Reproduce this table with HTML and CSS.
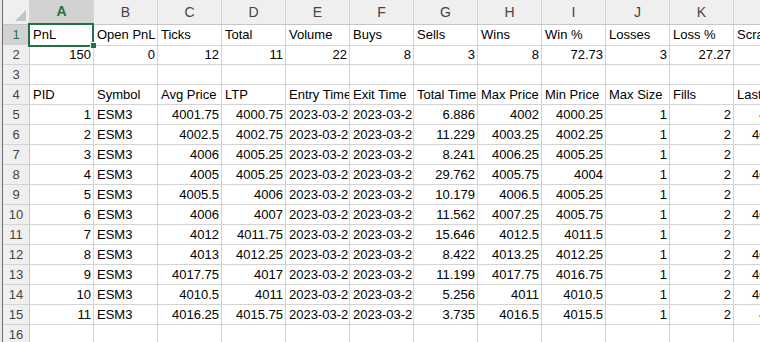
FILE: index.html
```html
<!DOCTYPE html>
<html>
<head>
<meta charset="utf-8">
<link rel="stylesheet" href="styles.css">
</head>
<body>
<div class="sheet">
  <div class="grid">
    <div class="row hdr">
      <div class="c corner"><span class="tri"></span></div>
      <div class="c ch on">A</div><div class="c ch">B</div><div class="c ch">C</div><div class="c ch">D</div><div class="c ch">E</div><div class="c ch">F</div><div class="c ch">G</div><div class="c ch">H</div><div class="c ch">I</div><div class="c ch">J</div><div class="c ch">K</div><div class="c ch">L</div>
    </div>
    <div class="row">
      <div class="c rh on">1</div>
      <div class="c sel">PnL</div><div class="c">Open PnL</div><div class="c">Ticks</div><div class="c">Total</div><div class="c">Volume</div><div class="c">Buys</div><div class="c">Sells</div><div class="c">Wins</div><div class="c">Win %</div><div class="c">Losses</div><div class="c">Loss %</div><div class="c">Scratch</div>
    </div>
    <div class="row">
      <div class="c rh">2</div>
      <div class="c n">150</div><div class="c n">0</div><div class="c n">12</div><div class="c n">11</div><div class="c n">22</div><div class="c n">8</div><div class="c n">3</div><div class="c n">8</div><div class="c n">72.73</div><div class="c n">3</div><div class="c n">27.27</div><div class="c"></div>
    </div>
    <div class="row">
      <div class="c rh">3</div>
      <div class="c"></div><div class="c"></div><div class="c"></div><div class="c"></div><div class="c"></div><div class="c"></div><div class="c"></div><div class="c"></div><div class="c"></div><div class="c"></div><div class="c"></div><div class="c"></div>
    </div>
    <div class="row">
      <div class="c rh">4</div>
      <div class="c">PID</div><div class="c">Symbol</div><div class="c">Avg Price</div><div class="c">LTP</div><div class="c">Entry Time</div><div class="c">Exit Time</div><div class="c">Total Time</div><div class="c">Max Price</div><div class="c">Min Price</div><div class="c">Max Size</div><div class="c">Fills</div><div class="c">Last Price</div>
    </div>
    <div class="row">
      <div class="c rh">5</div>
      <div class="c n">1</div><div class="c">ESM3</div><div class="c n">4001.75</div><div class="c n">4000.75</div><div class="c">2023-03-23 09:31:02</div><div class="c">2023-03-23 09:31:09</div><div class="c n">6.886</div><div class="c n">4002</div><div class="c n">4000.25</div><div class="c n">1</div><div class="c n">2</div><div class="c n">4001.5</div>
    </div>
    <div class="row">
      <div class="c rh">6</div>
      <div class="c n">2</div><div class="c">ESM3</div><div class="c n">4002.5</div><div class="c n">4002.75</div><div class="c">2023-03-23 09:32:14</div><div class="c">2023-03-23 09:32:25</div><div class="c n">11.229</div><div class="c n">4003.25</div><div class="c n">4002.25</div><div class="c n">1</div><div class="c n">2</div><div class="c n">4002.75</div>
    </div>
    <div class="row">
      <div class="c rh">7</div>
      <div class="c n">3</div><div class="c">ESM3</div><div class="c n">4006</div><div class="c n">4005.25</div><div class="c">2023-03-23 09:33:40</div><div class="c">2023-03-23 09:33:48</div><div class="c n">8.241</div><div class="c n">4006.25</div><div class="c n">4005.25</div><div class="c n">1</div><div class="c n">2</div><div class="c n">4006</div>
    </div>
    <div class="row">
      <div class="c rh">8</div>
      <div class="c n">4</div><div class="c">ESM3</div><div class="c n">4005</div><div class="c n">4005.25</div><div class="c">2023-03-23 09:35:05</div><div class="c">2023-03-23 09:35:35</div><div class="c n">29.762</div><div class="c n">4005.75</div><div class="c n">4004</div><div class="c n">1</div><div class="c n">2</div><div class="c n">4005.25</div>
    </div>
    <div class="row">
      <div class="c rh">9</div>
      <div class="c n">5</div><div class="c">ESM3</div><div class="c n">4005.5</div><div class="c n">4006</div><div class="c">2023-03-23 09:36:21</div><div class="c">2023-03-23 09:36:31</div><div class="c n">10.179</div><div class="c n">4006.5</div><div class="c n">4005.25</div><div class="c n">1</div><div class="c n">2</div><div class="c n">4006</div>
    </div>
    <div class="row">
      <div class="c rh">10</div>
      <div class="c n">6</div><div class="c">ESM3</div><div class="c n">4006</div><div class="c n">4007</div><div class="c">2023-03-23 09:38:02</div><div class="c">2023-03-23 09:38:14</div><div class="c n">11.562</div><div class="c n">4007.25</div><div class="c n">4005.75</div><div class="c n">1</div><div class="c n">2</div><div class="c n">4007.25</div>
    </div>
    <div class="row">
      <div class="c rh">11</div>
      <div class="c n">7</div><div class="c">ESM3</div><div class="c n">4012</div><div class="c n">4011.75</div><div class="c">2023-03-23 09:40:11</div><div class="c">2023-03-23 09:40:27</div><div class="c n">15.646</div><div class="c n">4012.5</div><div class="c n">4011.5</div><div class="c n">1</div><div class="c n">2</div><div class="c n">4011.5</div>
    </div>
    <div class="row">
      <div class="c rh">12</div>
      <div class="c n">8</div><div class="c">ESM3</div><div class="c n">4013</div><div class="c n">4012.25</div><div class="c">2023-03-23 09:41:50</div><div class="c">2023-03-23 09:41:58</div><div class="c n">8.422</div><div class="c n">4013.25</div><div class="c n">4012.25</div><div class="c n">1</div><div class="c n">2</div><div class="c n">4012.25</div>
    </div>
    <div class="row">
      <div class="c rh">13</div>
      <div class="c n">9</div><div class="c">ESM3</div><div class="c n">4017.75</div><div class="c n">4017</div><div class="c">2023-03-23 09:43:33</div><div class="c">2023-03-23 09:43:44</div><div class="c n">11.199</div><div class="c n">4017.75</div><div class="c n">4016.75</div><div class="c n">1</div><div class="c n">2</div><div class="c n">4017.25</div>
    </div>
    <div class="row">
      <div class="c rh">14</div>
      <div class="c n">10</div><div class="c">ESM3</div><div class="c n">4010.5</div><div class="c n">4011</div><div class="c">2023-03-23 09:45:09</div><div class="c">2023-03-23 09:45:14</div><div class="c n">5.256</div><div class="c n">4011</div><div class="c n">4010.5</div><div class="c n">1</div><div class="c n">2</div><div class="c n">4010.75</div>
    </div>
    <div class="row">
      <div class="c rh">15</div>
      <div class="c n">11</div><div class="c">ESM3</div><div class="c n">4016.25</div><div class="c n">4015.75</div><div class="c">2023-03-23 09:46:40</div><div class="c">2023-03-23 09:46:44</div><div class="c n">3.735</div><div class="c n">4016.5</div><div class="c n">4015.5</div><div class="c n">1</div><div class="c n">2</div><div class="c n">4015.5</div>
    </div>
    <div class="row">
      <div class="c rh">16</div>
      <div class="c"></div><div class="c"></div><div class="c"></div><div class="c"></div><div class="c"></div><div class="c"></div><div class="c"></div><div class="c"></div><div class="c"></div><div class="c"></div><div class="c"></div><div class="c"></div>
    </div>
  </div>
</div>
</body>
</html>
```

FILE: styles.css
```css
html, body {
  margin: 0;
  padding: 0;
  overflow: hidden;
  background: #ffffff;
}
.sheet {
  width: 820px;
  padding-left: 2px;
  background: #e9e9e9;
  font-family: "Liberation Sans", Arial, sans-serif;
  font-size: 13px;
  color: #000;
}
.grid {
  border-left: 1px solid #6e6e6e;
  background: #fff;
}
.row {
  display: grid;
  grid-template-columns: 27px repeat(11, 64px) 68px;
  height: 20px;
}
.row.hdr {
  height: 25px;
}
.c {
  box-sizing: border-box;
  border-right: 1px solid #d4d4d4;
  border-bottom: 1px solid #d4d4d4;
  padding: 0 2px 0 3px;
  line-height: 20px;
  white-space: nowrap;
  overflow: hidden;
}
.c.n {
  text-align: right;
  padding: 0 2px 0 2px;
}
.hdr .c {
  background: #efefef;
  color: #444;
  text-align: center;
  font-size: 14px;
  line-height: 24px;
  border-bottom-color: #c6c6c6;
  border-right-color: #d4d4d4;
  padding: 0;
}
.hdr .c.on {
  background: #d2d2d2;
  color: #217346;
  font-weight: bold;
  border-bottom: 2px solid #217346;
  line-height: 23px;
}
.corner {
  position: relative;
}
.tri {
  position: absolute;
  right: 3px;
  bottom: 3px;
  width: 0;
  height: 0;
  border-left: 11px solid transparent;
  border-bottom: 11px solid #c4c4c4;
}
.c.rh {
  background: #efefef;
  color: #444;
  text-align: center;
  padding: 0;
  font-size: 13px;
  border-right-color: #c6c6c6;
}
.c.rh.on {
  background: #d2d2d2;
  color: #217346;
}
.sel {
  position: relative;
  overflow: visible;
}
.sel::before {
  content: "";
  position: absolute;
  left: -2px;
  top: -2px;
  right: -1px;
  bottom: -2px;
  border: 2px solid #217346;
  pointer-events: none;
}
.sel::after {
  content: "";
  position: absolute;
  right: -3px;
  bottom: -3px;
  width: 5px;
  height: 5px;
  background: #217346;
  border-left: 1px solid #fff;
  border-top: 1px solid #fff;
}
```
